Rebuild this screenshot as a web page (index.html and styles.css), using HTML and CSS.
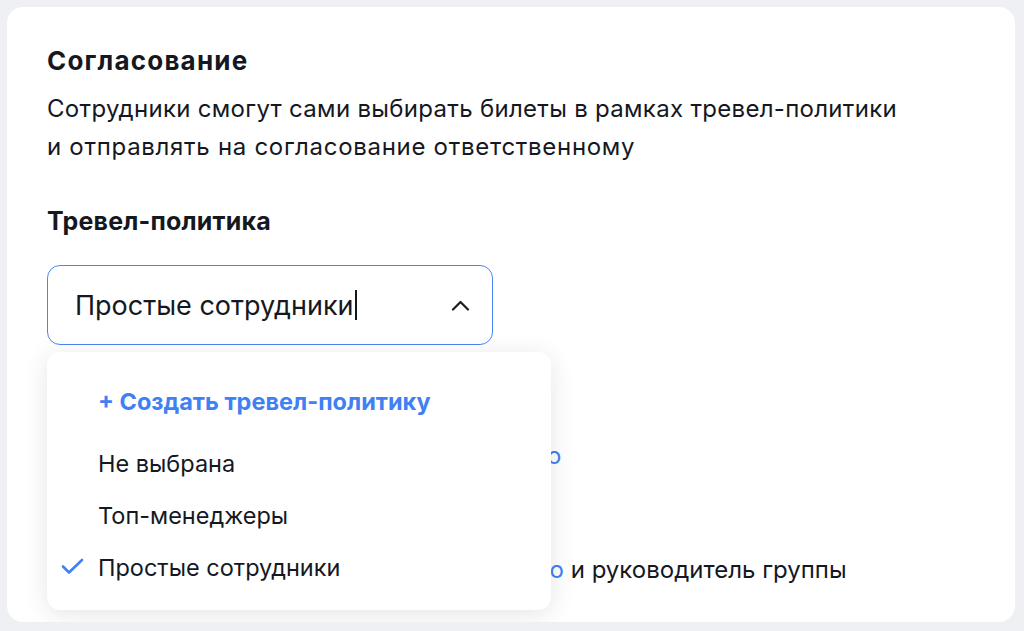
FILE: index.html
```html
<!DOCTYPE html>
<html lang="ru">
<head>
  <meta charset="UTF-8">
  <meta name="viewport" content="width=device-width, initial-scale=1.0">
  <title>Согласование</title>
  <link rel="stylesheet" href="styles.css">
</head>
<body>
  <div class="card">
    <h2>Согласование</h2>
    <p class="hint">Сотрудники смогут сами выбирать билеты в рамках тревел-политики<br><span class="wide">и отправлять на согласование ответственному</span></p>

    <h3>Тревел-политика</h3>

    <div class="field">
      <div class="select open">
        <span class="value">Простые сотрудники</span><span class="caret"></span>
        <svg class="chevron" width="19" height="11" viewBox="0 0 19 11">
          <path d="M2 9.5 L9.5 2 L17 9.5" fill="none" stroke="#1b1e26" stroke-width="2.2" stroke-linecap="round" stroke-linejoin="round"/>
        </svg>
      </div>

      <!-- dropdown list of policies -->
      <div class="menu">
        <div class="menu-item create">+ Создать тревел-политику</div>
        <div class="menu-item">Не выбрана</div>
        <div class="menu-item">Топ-менеджеры</div>
        <div class="menu-item selected">
          <svg class="check" width="23" height="17" viewBox="0 0 23 17">
            <path d="M2 8.5 L8 14.5 L21 2" fill="none" stroke="#3f80f2" stroke-width="2.6" stroke-linecap="round" stroke-linejoin="round"/>
          </svg>
          Простые сотрудники
        </div>
      </div>
    </div>

    <div class="approvers">
      <p class="row">Согласует ответственный: <a href="#">не назначено</a></p>
      <p class="row">Сотрудники без руководителя</p>
      <p class="row">Согласуют ответственные: <a href="#">не назначено</a> и руководитель группы</p>
    </div>
  </div>
</body>
</html>
```

FILE: styles.css
```css
body {
  margin: 0;
  padding: 7px 9px 9px 7px;
  background: #eef0f4;
  font-family: Inter, "Noto Sans", sans-serif;
  color: #15181f;
}
.card {
  background: #fff;
  border-radius: 16px;
  height: 615px;
  box-sizing: border-box;
  padding: 39px 40px 0;
  overflow: hidden;
}
h2 {
  margin: 0;
  font-size: 26px;
  line-height: 30px;
  font-weight: 700;
  letter-spacing: 1.2px;
}
.hint {
  margin: 14px 0 0;
  font-size: 24px;
  line-height: 38px;
  letter-spacing: 0.3px;
}
.hint .wide {
  letter-spacing: 0.7px;
}
h3 {
  margin: 40px 0 0;
  font-size: 25px;
  line-height: 30px;
  font-weight: 700;
  letter-spacing: 0.2px;
}
.field {
  position: relative;
  width: 446px;
  margin-top: 29px;
}
.select {
  height: 80px;
  box-sizing: border-box;
  border: 1.5px solid #4a86f1;
  border-radius: 13px;
  display: flex;
  align-items: center;
  padding: 0 22px 0 27px;
  font-size: 27px;
}
.caret {
  width: 1.5px;
  height: 30px;
  background: #15181f;
  margin-left: 2px;
}
.chevron {
  margin-left: auto;
}
.menu {
  position: absolute;
  left: 0;
  top: 87px;
  width: 504px;
  height: 258px;
  box-sizing: border-box;
  padding: 22px 0 0;
  background: #fff;
  border-radius: 13px;
  box-shadow: 0 4px 24px rgba(30, 40, 60, 0.12);
  z-index: 2;
}
.menu-item {
  position: relative;
  padding-left: 51px;
  height: 52px;
  line-height: 52px;
  font-size: 23.5px;
}
.menu-item.create {
  color: #3f80f2;
  font-weight: 700;
  height: 64px;
  line-height: 56px;
}
.check {
  position: absolute;
  left: 14px;
  top: 16px;
}
.approvers {
  margin-top: 82px;
  padding-left: 33px;
}
.row {
  margin: 0;
  font-size: 24px;
  line-height: 57px;
  white-space: nowrap;
}
.row:first-child {
  padding-left: 4px;
}
.row a {
  color: #3f80f2;
  text-decoration: none;
}
```
